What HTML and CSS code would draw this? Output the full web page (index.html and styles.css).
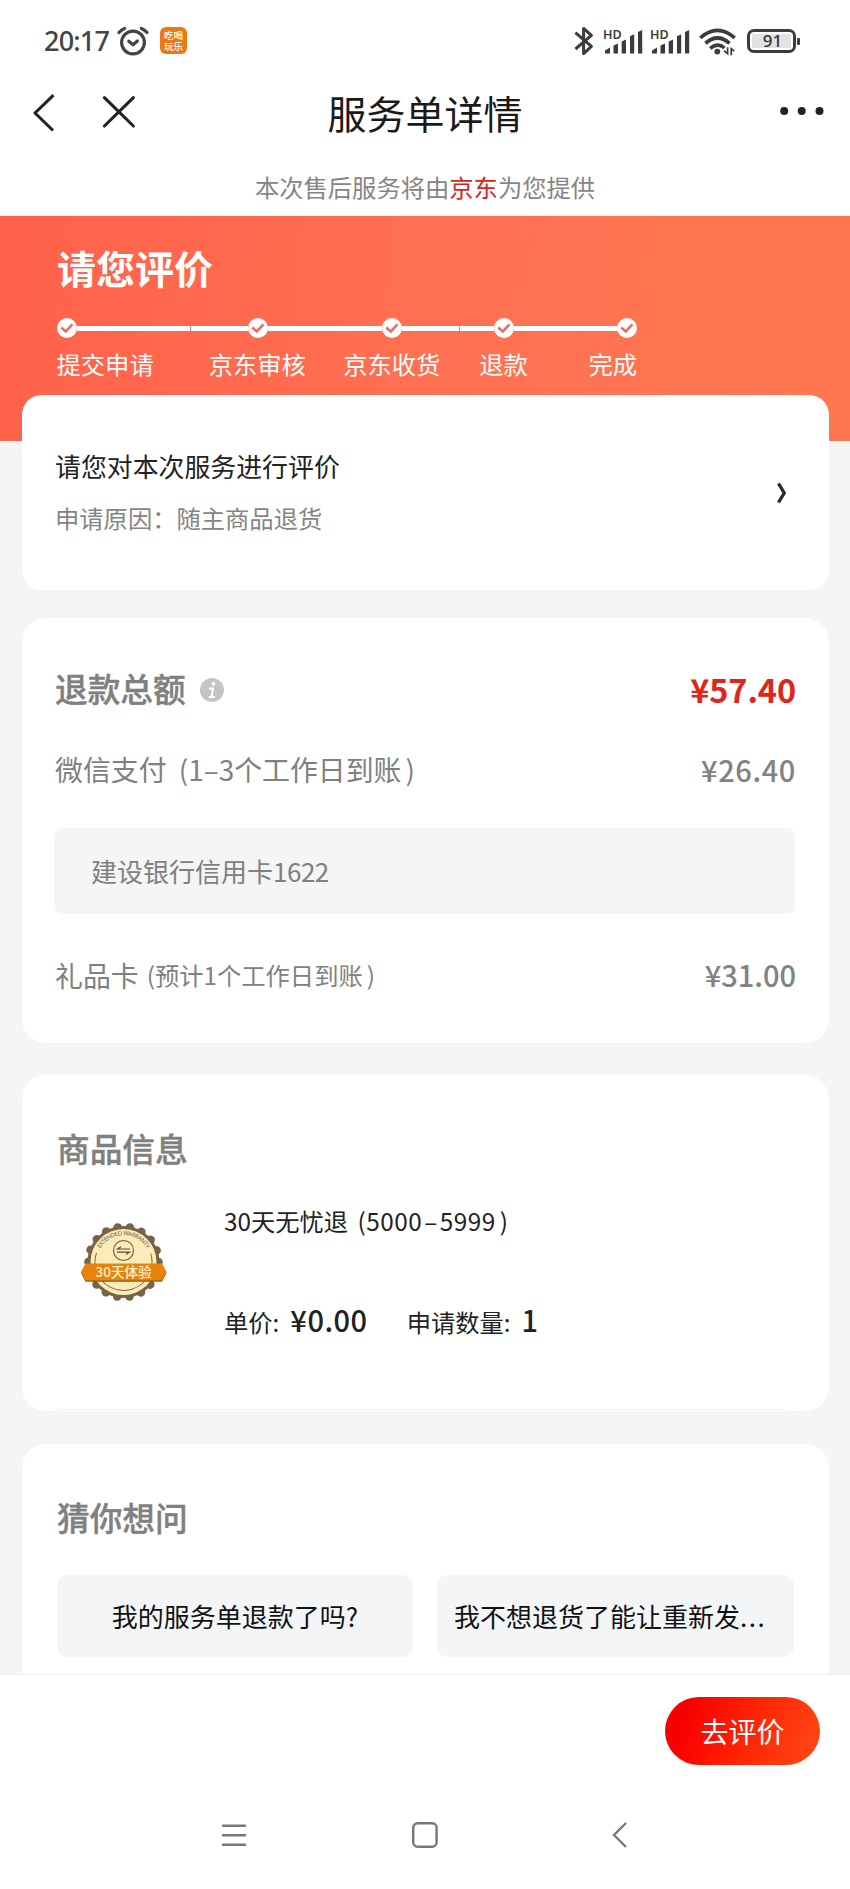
FILE: index.html
```html
<!DOCTYPE html>
<html lang="zh-CN">
<head>
<meta charset="utf-8">
<title>服务单详情</title>
<link rel="stylesheet" href="styles.css">
</head>
<body>
<div class="page">
  <header class="statusbar">
    <div class="status-left">
      <span class="clock">20:17</span>
      <svg class="alarm" width="32" height="30" viewBox="0 0 32 30" fill="none" stroke="#444" stroke-width="3.200" stroke-linecap="round" stroke-linejoin="round">
        <circle cx="16" cy="16.500" r="11.400"/><path d="M11.800 15.200l4.200 3.600 4.400-3.800"/><path d="M2 6.600Q4.400 3.600 7.600 2.400M30 6.600Q27.600 3.600 24.400 2.400"/>
      </svg>
      <span class="app-icon">吃喝<br>玩乐</span>
    </div>
    <div class="status-right">
      <svg class="bluetooth" width="20" height="30" viewBox="0 0 20 30" fill="none" stroke="#3c3c3c" stroke-width="3" stroke-linejoin="round"><path d="M1.400 6.600L17.400 20.400 9.600 27.600V2.400L17.400 9.400 1.400 23"/></svg>
      <svg class="signal" width="40" height="36" viewBox="0 -8 40 36" fill="#3c3c3c">
        <text x="0" y="10.500" class="hd">HD</text>
        <path d="M2 25.500V22.500L7 19.600V25.500ZM10.500 25.500V17.600L15 15.600V25.500ZM18.700 25.500V13.600L23 11.600V25.500ZM27 25.500V8.200L31.200 6.200V25.500ZM35 25.500V4L39.200 2V25.500Z"/>
      </svg>
      <svg class="signal second" width="40" height="36" viewBox="0 -8 40 36" fill="#3c3c3c">
        <text x="0" y="10.500" class="hd">HD</text>
        <path d="M2 25.500V22.500L7 19.600V25.500ZM10.500 25.500V17.600L15 15.600V25.500ZM18.700 25.500V13.600L23 11.600V25.500ZM27 25.500V8.200L31.200 6.200V25.500ZM35 25.500V4L39.200 2V25.500Z"/>
      </svg>
      <svg class="wifi" width="38" height="28" viewBox="0 0 38 28" fill="none" stroke="#3c3c3c" stroke-width="3.600">
        <path d="M1.300 9.800Q18.500-5 35.700 9.800"/><path d="M6.500 15.400Q18.500 4.600 30.500 15.400"/><path d="M11.200 20.400Q18.500 14 25.500 20"/><circle cx="18.300" cy="23.600" r="2.900" fill="#3c3c3c" stroke="none"/><path d="M25 22.600L28.600 25.600V19.200M32.200 27.200V20.600L35.200 23.200" stroke-width="1.700"/>
      </svg>
      <span class="battery"><span class="battery-level">91</span></span><i class="battery-cap"></i>
    </div>
  </header>

  <nav class="titlebar">
    <svg class="back" width="22" height="38" viewBox="0 0 22 38" fill="none" stroke="#222" stroke-width="3.100" stroke-linejoin="round"><path d="M20.500 1.200L2 19 20 36.500"/></svg>
    <svg class="close" width="34" height="34" viewBox="0 0 34 34" stroke="#222" stroke-width="3.100" stroke-linecap="round"><path d="M2.400 2.600L31.400 31M31.400 2.600L2.400 31"/></svg>
    <h1 class="title">服务单详情</h1>
    <svg class="more" width="46" height="10" viewBox="0 0 46 10" fill="#222"><circle cx="5.200" cy="5" r="4"/><circle cx="22.700" cy="5" r="4"/><circle cx="40.500" cy="5" r="4"/></svg>
  </nav>
  <p class="provider">本次售后服务将由<span class="brand">京东</span>为您提供</p>

  <main class="content">
    <section class="hero">
      <h2 class="hero-title">请您评价</h2>
      <ol class="steps">
        <li class="step first"><div class="track"><svg class="check" viewBox="0 0 20 20"><circle cx="10" cy="10" r="10" fill="#fff"/><path d="M4.200 9.400l4.600 4 6.600-7"/></svg><i class="line"></i></div><span class="step-name">提交申请</span></li>
        <li class="step ticked"><div class="track"><i class="line"></i><svg class="check" viewBox="0 0 20 20"><circle cx="10" cy="10" r="10" fill="#fff"/><path d="M4.200 9.400l4.600 4 6.600-7"/></svg><i class="line"></i></div><span class="step-name">京东审核</span></li>
        <li class="step"><div class="track"><i class="line"></i><svg class="check" viewBox="0 0 20 20"><circle cx="10" cy="10" r="10" fill="#fff"/><path d="M4.200 9.400l4.600 4 6.600-7"/></svg><i class="line"></i></div><span class="step-name">京东收货</span></li>
        <li class="step short ticked"><div class="track"><i class="line"></i><svg class="check" viewBox="0 0 20 20"><circle cx="10" cy="10" r="10" fill="#fff"/><path d="M4.200 9.400l4.600 4 6.600-7"/></svg><i class="line"></i></div><span class="step-name">退款</span></li>
        <li class="step short last"><div class="track"><i class="line"></i><svg class="check" viewBox="0 0 20 20"><circle cx="10" cy="10" r="10" fill="#fff"/><path d="M4.200 9.400l4.600 4 6.600-7"/></svg></div><span class="step-name">完成</span></li>
      </ol>
    </section>

    <section class="card review">
      <div class="review-text">
        <p class="review-title">请您对本次服务进行评价</p>
        <p class="review-reason">申请原因：随主商品退货</p>
      </div>
      <svg class="chevron" width="12" height="22" viewBox="0 0 12 22" fill="none" stroke="#2b2b2b" stroke-width="3.400"><path d="M2.500 1.500L8.200 11 2.500 20.500"/></svg>
    </section>

    <section class="card refund">
      <div class="row total">
        <h3 class="section-title">退款总额</h3>
        <svg class="info" width="24" height="24" viewBox="0 0 24 24"><circle cx="12" cy="12" r="12" fill="#c4c4c4"/><circle cx="13.400" cy="5.800" r="1.900" fill="#fff"/><path d="M9 10.600H13L11.600 18.600M8.600 19H15" fill="none" stroke="#fff" stroke-width="2.200"/></svg>
        <span class="amount amount-total">¥57.40</span>
      </div>
      <div class="row wechat">
        <span class="pay-name">微信支付 (1–3个工作日到账<span class="paren">)</span></span>
        <span class="amount wide">¥26.40</span>
      </div>
      <div class="bank">建设银行信用卡<span class="card-tail">1622</span></div>
      <div class="row gift">
        <span class="pay-name">礼品卡</span><span class="pay-note">(预计1个工作日到账<span class="paren">)</span></span>
        <span class="amount">¥31.00</span>
      </div>
    </section>

    <section class="card product">
      <h3 class="section-title">商品信息</h3>
      <div class="product-body">
        <svg class="badge" width="88" height="80" viewBox="0 0 88 80">
          <circle cx="43.500" cy="39" r="36" fill="#766349"/>
          <circle cx="43.500" cy="39" r="35" fill="none" stroke="#766349" stroke-width="8.600" stroke-linecap="round" stroke-dasharray="0.100 12.117"/>
          <circle cx="43.500" cy="39" r="33" fill="#fbebb9"/>
          <circle cx="43.500" cy="39" r="28.500" fill="none" stroke="#77684f" stroke-width="1" stroke-dasharray="107 72" transform="rotate(-17 43.500 39)"/>
          <path id="arc" d="M18.500 29A27 27 0 0 1 68.500 29" fill="none"/>
          <text class="badge-arc"><textPath href="#arc" startOffset="50%" text-anchor="middle" textLength="56">EXTENDED WARRANTY</textPath></text>
          <circle cx="43.500" cy="27.500" r="10" fill="none" stroke="#6d5b42" stroke-width="1.100"/>
          <path d="M50 26H37.500L41 23.800M37 29.200H49.500L46 31.400" fill="none" stroke="#5d4c38" stroke-width="1.200"/>
          <path d="M5.500 41.500H82L86.500 50 82 58.800H5.500L1 50Z" fill="#8b571d"/>
          <path d="M5.500 40.500H82L86.500 49 82 57.500H5.500L1 49Z" fill="#e8830c"/>
          <text x="43.500" y="53.500" class="badge-label">30天体验</text>
        </svg>
        <div class="product-text">
          <p class="product-name">30天无忧退 <span class="range">(5000<span class="dash">–</span>5999<span class="paren">)</span></span></p>
          <p class="product-meta"><span>单价:</span><b class="price">¥0.00</b><span class="count-label">申请数量:</span><b class="count">1</b></p>
        </div>
      </div>
      <hr class="product-rule">
    </section>

    <section class="card faq">
      <h3 class="section-title">猜你想问</h3>
      <div class="questions">
        <div class="question">我的服务单退款了吗?</div>
        <div class="question long">我不想退货了能让重新发<span class="dots">...</span></div>
      </div>
    </section>
  </main>

  <footer class="actions"><button class="rate">去评价</button></footer>
  <div class="sysnav">
    <svg width="26" height="26" viewBox="0 0 26 26" stroke="#777" stroke-width="2.400" stroke-linecap="round"><path d="M2 3.700H24M2 13.200H24M2 22.700H24"/></svg>
    <svg class="home" width="26" height="26" viewBox="0 0 26 26" fill="none" stroke="#777" stroke-width="2.400"><rect x="1.200" y="1.200" width="23.400" height="23.600" rx="4.500"/></svg>
    <svg width="26" height="26" viewBox="0 0 26 26" fill="none" stroke="#777" stroke-width="2.400"><path d="M19 1L7 13 19 25"/></svg>
  </div>
</div>
</body>
</html>
```

FILE: styles.css
```css
* { box-sizing: border-box; }
body, h1, h2, h3, p, ol { margin: 0; padding: 0; }
body { background: #fff; font-family: "Noto Sans CJK SC", sans-serif; color: #222; }
svg { display: block; flex: none; }
.page { width: 850px; height: 1889px; display: flex; flex-direction: column; overflow: hidden; white-space: nowrap; }

.statusbar { height: 82px; flex: none; display: flex; justify-content: space-between; padding: 26px 50px 0 44px; }
.status-left, .status-right { display: flex; align-items: flex-start; height: 30px; }
.clock { font: 500 27px/30px "Noto Sans", sans-serif; letter-spacing: -.8px; color: #444; width: 73px; }
.app-icon { margin: 1px 0 0 11px; width: 27px; height: 27px; border-radius: 6px; background: #ee7812; color: #fff; font-size: 9.500px; font-weight: 500; line-height: 10.500px; padding-top: 3px; text-align: center; }
.signal { margin: -6px 0 0 9px; }
.signal.second { margin-left: 7px; }
.hd { font: 600 12.500px "Noto Sans", sans-serif; }
.wifi { margin: 2px 0 0 9px; }
.battery { margin: 3px 0 0 10px; width: 49px; height: 24px; border: 3px solid #3c3c3c; border-radius: 7px; padding: 2px; }
.battery-level { display: block; height: 14px; background: #e2e2e2; font: 500 17px/14px "Noto Sans", sans-serif; text-align: center; padding-left: 2px; color: #333; }
.battery-cap { width: 3px; height: 7px; margin: 12px 0 0 1px; border-radius: 1px; background: #3c3c3c; }

.titlebar { height: 82px; flex: none; display: grid; grid-template-columns: 69px 131px 1fr 200px; padding: 0 25px 0 33px; align-items: start; }
.back { margin-top: 12px; }
.close { margin-top: 13px; }
.title { font-size: 39px; font-weight: 400; line-height: 58px; text-align: center; margin-top: 1px; padding-right: 8px; color: #1a1a1a; }
.more { justify-self: end; margin-top: 24px; }
.provider { height: 52px; flex: none; font-size: 24.300px; line-height: 46px; text-align: center; color: #858585; }
.brand { color: #d8251c; }

.content { height: 1458px; flex: none; background: #f5f5f5; overflow: hidden; }
.hero { height: 225px; background: linear-gradient(95deg, #ff614b, #ff7052 50%, #ff7751); padding: 25px 0 0 57px; color: #fff; }
.hero-title { font-size: 39px; line-height: 52px; font-weight: 700; }
.steps { display: flex; list-style: none; margin: 25px 0 0 -.500px; }
.step { width: 134.500px; display: flex; flex-direction: column; align-items: center; }
.step.first { width: 133.500px; align-items: flex-start; }
.step.short { width: 89px; }
.step.last { align-items: flex-end; }
.track { display: flex; align-items: center; width: 100%; height: 20px; }
.check { width: 20px; height: 20px; }
.check path { fill: none; stroke: #e8705f; stroke-width: 2.600; }
.line { flex: 1; height: 5px; background: #fff; }
.ticked .line:first-child { border-left: 1px solid #d98d7d; }
.step-name { font-size: 24.300px; line-height: 36px; margin-top: 8px; }

.card { margin: 0 21px 0 22px; background: #fff; border-radius: 24px; }
.review { height: 195px; margin-top: -46px; display: flex; justify-content: space-between; align-items: flex-start; padding: 51px 41px 0 33px; border-radius: 20px; }
.review-title { font-size: 25.900px; line-height: 40px; color: #222; }
.review-reason { font-size: 24.300px; line-height: 36px; margin-top: 14px; color: #858585; }
.chevron { margin-top: 36px; }

.refund { height: 425px; margin-top: 28px; padding: 0 34px 0 33px; overflow: hidden; }
.row { display: flex; align-items: center; }
.total { height: 48px; margin-top: 46px; }
.section-title { font-size: 32.700px; line-height: 48px; font-weight: 500; color: #808080; -webkit-text-stroke: .4px; }
.info { margin: 3px 0 0 14px; }
.amount { margin: -2px -1px 0 auto; font-size: 29px; line-height: 40px; font-weight: 500; color: #828282; }
.wide { letter-spacing: .600px; margin-top: 0; }
.amount-total { font-size: 32.500px; font-weight: 700; color: #e1251b; letter-spacing: -.100px; margin-top: 1px; }
.wechat { height: 40px; margin-top: 37px; }
.pay-name { font-size: 27.900px; line-height: 40px; color: #808080; word-spacing: 6px; }
.pay-note { font-size: 24.300px; line-height: 40px; color: #808080; margin-left: 8px; }
.paren { margin-left: 4px; }
.bank { height: 86px; margin: 39px 0 0 -1px; border-radius: 8px; background: #f5f5f5; padding-left: 37px; font-size: 26px; line-height: 86px; color: #808080; }
.card-tail { letter-spacing: -.500px; }
.gift { height: 40px; margin-top: 41px; }

.product { height: 336px; margin-top: 32px; padding: 49px 34px 0 35px; display: flex; flex-direction: column; }
.product-body { display: flex; margin-top: 25px; height: 210px; }
.badge { margin: 26px 0 0 23px; }
.badge-arc { font: 6px "Noto Sans", sans-serif; fill: #705e44; }
.badge-label { font-size: 13.500px; font-weight: 500; fill: #fff1c7; text-anchor: middle; }
.product-text { margin-left: 56px; }
.product-name { font-size: 24.300px; line-height: 36px; margin-top: 6px; word-spacing: 4px; }
.range { letter-spacing: .500px; }
.dash { margin: 0 2px; }
.product-meta { display: flex; align-items: baseline; font-size: 24.300px; line-height: 44px; margin-top: 58px; }
.price { font-size: 29px; font-weight: 500; margin-left: 11px; letter-spacing: .500px; }
.count-label { margin-left: 39px; }
.count { font-size: 29px; font-weight: 500; margin-left: 11px; }
.product-rule { width: 728px; margin: auto 0 0; border: 0; border-top: 1px solid #f0f0f0; position: relative; }
.product { padding-bottom: 1px; }

.faq { height: 260px; margin-top: 33px; padding: 49px 35px 0; }
.questions { display: grid; grid-template-columns: 356px 357px; gap: 24px; margin-top: 34px; }
.question { height: 82px; border-radius: 10px; background: #f4f5f7; font-size: 26px; line-height: 82px; text-align: center; color: #111; }
.question.long { text-align: left; padding-left: 17px; }
.dots { letter-spacing: 1.500px; }

.actions { height: 115px; flex: none; border-top: 1px solid #eee; display: flex; justify-content: flex-end; padding: 22px 30px 0; }
.rate { width: 155px; height: 68px; border: 0; border-radius: 34px; background: linear-gradient(110deg, #f80000 15%, #ff2a05 60%, #ff4b16); color: #fff; font: 400 28px/65px "Noto Sans CJK SC", sans-serif; padding: 0; }
.sysnav { flex: 1; display: flex; gap: 167px; padding: 33px 0 0 221px; }
.home { margin: 0 2px 0 -2px; }
```
